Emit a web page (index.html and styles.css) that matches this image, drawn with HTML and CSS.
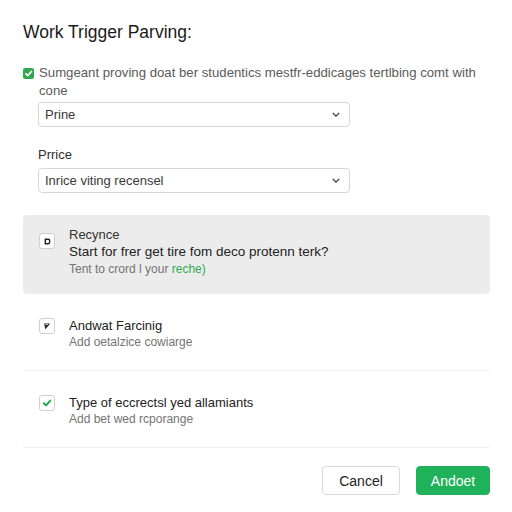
FILE: index.html
```html
<!DOCTYPE html>
<html>
<head>
<meta charset="utf-8">
<link rel="stylesheet" href="styles.css">
</head>
<body>
<div class="page">
  <h1 class="title">Work Trigger Parving:</h1>

  <div class="consent">
    <span class="check-filled">
      <svg viewBox="0 0 12 12" width="11" height="11"><path d="M3 6.2 L5.2 8.3 L9.2 3.8" fill="none" stroke="#fff" stroke-width="1.8" stroke-linecap="round" stroke-linejoin="round"/></svg>
    </span>
    <span class="consent-text">Sumgeant proving doat ber studentics mestfr-eddicages tertlbing comt with cone</span>
  </div>

  <div class="field first">
    <div class="select">
      <span>Prine</span>
      <svg class="chev" viewBox="0 0 10 6" width="8" height="5"><path d="M1 1 L5 5 L9 1" fill="none" stroke="#333" stroke-width="1.6"/></svg>
    </div>
  </div>

  <div class="field">
    <label class="label">Prrice</label>
    <div class="select">
      <span>Inrice viting recensel</span>
      <svg class="chev" viewBox="0 0 10 6" width="8" height="5"><path d="M1 1 L5 5 L9 1" fill="none" stroke="#333" stroke-width="1.6"/></svg>
    </div>
  </div>

  <div class="card">
    <span class="box">
      <svg viewBox="0 0 8 8" width="7" height="7"><path d="M1.5 1.5 H5 Q6.5 1.5 6.5 3.5 V4.5 Q6.5 6.5 5 6.5 H1.5 Z" fill="none" stroke="#222" stroke-width="1.6"/></svg>
    </span>
    <div class="item-text">
      <div class="item-cap">Recynce</div>
      <div class="item-main">Start for frer get tire fom deco protenn terk?</div>
      <div class="item-sub">Tent to crord l your <span class="green">reche)</span></div>
    </div>
  </div>

  <div class="row">
    <span class="box">
      <svg viewBox="0 0 8 8" width="8" height="8"><path d="M1.2 1.5 H7 L5 4.2 L2.2 7.2 Z" fill="#222"/><path d="M2.4 2.6 H5" stroke="#fff" stroke-width="0.8"/></svg>
    </span>
    <div class="item-text">
      <div class="item-title">Andwat Farcinig</div>
      <div class="item-sub">Add oetalzice cowiarge</div>
    </div>
  </div>

  <div class="row">
    <span class="box">
      <svg viewBox="0 0 10 10" width="10" height="10"><path d="M1.8 5.2 L4.1 7.4 L8.3 2.6" fill="none" stroke="#1fa64e" stroke-width="1.9" stroke-linecap="round" stroke-linejoin="round"/></svg>
    </span>
    <div class="item-text">
      <div class="item-title">Type of eccrectsl yed allamiants</div>
      <div class="item-sub">Add bet wed rcporange</div>
    </div>
  </div>

  <div class="actions">
    <button class="btn btn-cancel">Cancel</button>
    <button class="btn btn-primary">Andoet</button>
  </div>
</div>
</body>
</html>
```
FILE: styles.css
```css
* { box-sizing: border-box; }
html, body { margin: 0; background: #fff; }
body {
  font-family: "Liberation Sans", Arial, sans-serif;
  color: #2a2a2a;
}
.page {
  padding: 22px 22px 0 23px;
}
.title {
  margin: 0;
  font-size: 17.5px;
  line-height: 20px;
  font-weight: normal;
  color: #1a1a1a;
}
.consent {
  margin-top: 22px;
  display: flex;
  align-items: flex-start;
  gap: 5px;
}
.check-filled {
  flex: none;
  width: 11px;
  height: 11px;
  margin-top: 4px;
  background: #2fa84f;
  border-radius: 2px;
  display: flex;
  align-items: center;
  justify-content: center;
}
.consent-text {
  font-size: 13.2px;
  line-height: 18px;
  color: #5a5a5a;
}
.field {
  margin-left: 15px;
  width: 312px;
  margin-top: 19px;
}
.field.first { margin-top: 2px; }
.label {
  display: block;
  font-size: 13px;
  line-height: 18px;
  color: #2e2e2e;
  margin-bottom: 4px;
}
.select {
  height: 25px;
  border: 1px solid #d6d6d6;
  border-radius: 4px;
  padding: 0 9px 0 6px;
  display: flex;
  align-items: center;
  justify-content: space-between;
  font-size: 13px;
  color: #3a3a3a;
  background: #fff;
}
.chev { flex: none; }
.card {
  margin-top: 22px;
  background: #ececec;
  border-radius: 4px;
  padding: 12px 16px 16px 16px;
  display: flex;
  gap: 14px;
  align-items: flex-start;
}
.box {
  flex: none;
  width: 16px;
  height: 16px;
  border: 1px solid #cfcfcf;
  border-radius: 3px;
  background: #fff;
  display: flex;
  align-items: center;
  justify-content: center;
}
.card .box { margin-top: 6px; }
.item-text { display: flex; flex-direction: column; }
.item-cap {
  font-size: 13px;
  line-height: 16px;
  color: #333;
}
.item-main {
  font-size: 13.5px;
  line-height: 17px;
  color: #222;
}
.item-title {
  font-size: 13px;
  line-height: 16px;
  color: #222;
}
.item-sub {
  font-size: 12px;
  line-height: 17px;
  color: #747474;
}
.card .item-sub { margin-top: 1px; }
.green { color: #2eab4f; }
.row {
  display: flex;
  gap: 14px;
  align-items: flex-start;
  padding: 24px 16px 19px 16px;
  border-bottom: 1px solid #f0f0f0;
}
.actions {
  display: flex;
  justify-content: flex-end;
  gap: 16px;
  margin-top: 18px;
}
.btn {
  font-family: "Liberation Sans", Arial, sans-serif;
  font-size: 14px;
  height: 29px;
  border-radius: 4px;
  cursor: pointer;
}
.btn-cancel {
  width: 78px;
  background: #fff;
  border: 1px solid #d9d9d9;
  color: #222;
}
.btn-primary {
  width: 74px;
  background: #1fb25a;
  border: 1px solid #1fb25a;
  color: #fff;
}
```
